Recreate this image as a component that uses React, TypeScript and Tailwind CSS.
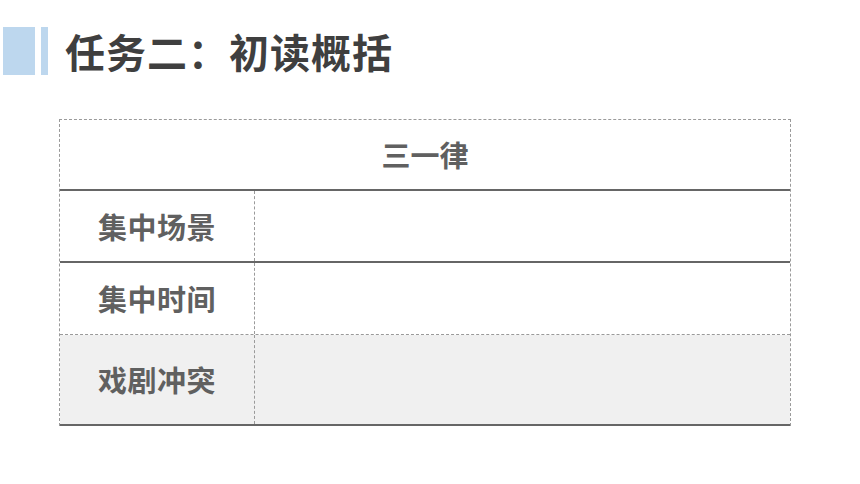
import React from 'react'

const rows = [
  { label: '集中场景', bottom: 'border-b-2 border-solid border-b-[#666666]', bg: 'bg-white', h: 'h-[72px]' },
  { label: '集中时间', bottom: 'border-b border-dashed border-b-[#9a9a9a]', bg: 'bg-white', h: 'h-[72px]' },
  { label: '戏剧冲突', bottom: 'border-b-2 border-solid border-b-[#666666]', bg: 'bg-[#f0f0f0]', h: 'h-[91px]' },
]

export default function App() {
  return (
    <div
      className="w-[860px] h-[484px] bg-white overflow-hidden"
      style={{ fontFamily: '"Noto Sans CJK SC", "Noto Sans", sans-serif' }}
    >
      {/* Title */}
      <div className="flex items-center pt-[27px] pl-[3px]">
        <div className="w-[32px] h-[48px] bg-[#bdd7ee]" />
        <div className="w-[7px] h-[48px] bg-[#bdd7ee] ml-[6px]" />
        <h1 className="ml-[17px] text-[40px] leading-none font-bold text-[#3f3f3f] tracking-[1px]">
          任务二：初读概括
        </h1>
      </div>

      {/* Table */}
      <div className="ml-[59px] mt-[44px] w-[732px] border-t border-l border-r border-dashed border-[#9a9a9a]">
        <div className="h-[71px] flex items-center justify-center border-b-2 border-solid border-b-[#666666]">
          <span className="text-[29px] font-bold text-[#606060] leading-none">三一律</span>
        </div>
        {rows.map(r => (
          <div key={r.label} className={`flex ${r.h} ${r.bg} ${r.bottom}`}>
            <div className="w-[195px] flex items-center justify-center border-r border-dashed border-r-[#9a9a9a]">
              <span className="text-[29px] font-bold text-[#606060] leading-none tracking-[0.5px]">{r.label}</span>
            </div>
            <div className="flex-1" />
          </div>
        ))}
      </div>
    </div>
  )
}
